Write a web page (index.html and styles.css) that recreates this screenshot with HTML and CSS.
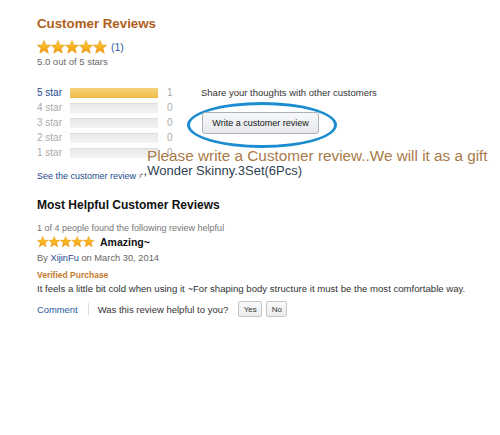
FILE: index.html
```html
<!DOCTYPE html>
<html>
<head>
<meta charset="utf-8">
<link rel="stylesheet" href="styles.css">
</head>
<body>
<div class="page">
  <h2 class="title">Customer Reviews</h2>
  <div class="rating">
    <span class="stars big">
      <svg viewBox="0 0 70 14" width="70" height="14">
        <defs>
          <linearGradient id="g1" x1="0" y1="0" x2="0" y2="1">
            <stop offset="0" stop-color="#ffce3a"/>
            <stop offset="1" stop-color="#f29b0c"/>
          </linearGradient>
          <polygon id="st" points="7,0.4 8.9,5 13.7,5.2 10,8.3 11.3,13.2 7,10.4 2.7,13.2 4,8.3 0.3,5.2 5.1,5" />
        </defs>
        <use href="#st" x="0" fill="url(#g1)" stroke="#e38b00" stroke-width="0.5"/>
        <use href="#st" x="14" fill="url(#g1)" stroke="#e38b00" stroke-width="0.5"/>
        <use href="#st" x="28" fill="url(#g1)" stroke="#e38b00" stroke-width="0.5"/>
        <use href="#st" x="42" fill="url(#g1)" stroke="#e38b00" stroke-width="0.5"/>
        <use href="#st" x="56" fill="url(#g1)" stroke="#e38b00" stroke-width="0.5"/>
      </svg>
    </span>
    <span class="count-link">(1)</span>
  </div>
  <div class="summary">5.0 out of 5 stars</div>

  <div class="hist-area">
    <div class="hist">
      <div class="hrow"><span class="hlabel active">5 star</span><span class="bar"><span class="fill" style="width:100%"></span></span><span class="hcount">1</span></div>
      <div class="hrow"><span class="hlabel">4 star</span><span class="bar"></span><span class="hcount">0</span></div>
      <div class="hrow"><span class="hlabel">3 star</span><span class="bar"></span><span class="hcount">0</span></div>
      <div class="hrow"><span class="hlabel">2 star</span><span class="bar"></span><span class="hcount">0</span></div>
      <div class="hrow"><span class="hlabel">1 star</span><span class="bar"></span><span class="hcount">0</span></div>
    </div>
    <div class="share">
      <div class="share-text">Share your thoughts with other customers</div>
      <div class="btn-wrap">
        <span class="ellipse"></span>
        <button class="write-btn">Write a customer review</button>
      </div>
    </div>
  </div>

  <div class="see-link">See the customer review <span class="chev">›</span></div>
  <div class="annot">
    <div class="annot1">Please write a Customer review..We will it as a gift</div>
    <div class="annot2">.,Wonder Skinny.3Set(6Pcs)</div>
  </div>

  <h3 class="helpful-title">Most Helpful Customer Reviews</h3>
  <div class="found">1 of 4 people found the following review helpful</div>
  <div class="review-head">
    <svg viewBox="0 0 57 12" width="57" height="12">
      <defs>
        <polygon id="sm" points="5.7,0.3 7.2,4.1 11.2,4.3 8.1,6.8 9.2,10.9 5.7,8.6 2.2,10.9 3.3,6.8 0.2,4.3 4.2,4.1"/>
      </defs>
      <use href="#sm" x="0" fill="url(#g1)" stroke="#e38b00" stroke-width="0.4"/>
      <use href="#sm" x="11.5" fill="url(#g1)" stroke="#e38b00" stroke-width="0.4"/>
      <use href="#sm" x="23" fill="url(#g1)" stroke="#e38b00" stroke-width="0.4"/>
      <use href="#sm" x="34.5" fill="url(#g1)" stroke="#e38b00" stroke-width="0.4"/>
      <use href="#sm" x="46" fill="url(#g1)" stroke="#e38b00" stroke-width="0.4"/>
    </svg>
    <span class="review-title">Amazing~</span>
  </div>
  <div class="byline">By <span class="author">XijinFu</span> on March 30, 2014</div>
  <div class="verified">Verified Purchase</div>
  <div class="review-text">It feels a little bit cold when using it ~For shaping body structure it must be the most comfortable way.</div>
  <div class="actions">
    <span class="comment">Comment</span>
    <span class="sep"></span>
    <span class="ask">Was this review helpful to you?</span>
    <button class="small-btn yes">Yes</button>
    <button class="small-btn no">No</button>
  </div>
</div>
</body>
</html>
```

FILE: styles.css
```css
html, body {
  margin: 0;
  padding: 0;
  background: #ffffff;
}
body {
  font-family: "Liberation Sans", Arial, sans-serif;
  color: #333;
  width: 500px;
  height: 435px;
  overflow: hidden;
}
.page {
  position: relative;
  padding: 15px 0 0 37px;
}
.title {
  margin: 0;
  font-size: 13.3px;
  line-height: 17px;
  font-weight: bold;
  color: #b0601a;
}
.rating {
  display: flex;
  align-items: center;
  gap: 4px;
  margin-top: 8px;
  height: 14px;
}
.stars svg { display: block; }
.count-link {
  font-size: 10.5px;
  color: #2a5a9a;
}
.summary {
  margin-top: 2px;
  font-size: 9.5px;
  line-height: 12px;
  color: #666;
}
.hist-area {
  display: flex;
  margin-top: 17px;
}
.hist {
  display: flex;
  flex-direction: column;
  width: 164px;
}
.hrow {
  display: flex;
  align-items: center;
  height: 15px;
}
.hlabel {
  width: 33px;
  font-size: 10px;
  color: #aaa;
}
.hlabel.active { color: #1e4a8c; }
.bar {
  width: 88px;
  height: 10px;
  background: linear-gradient(#e8e8e8, #f3f3f3);
  box-shadow: inset 0 1px 1px rgba(0,0,0,0.05);
  display: block;
}
.fill {
  display: block;
  height: 100%;
  background: linear-gradient(#f6d27a, #f0bb45);
}
.hcount {
  margin-left: 9px;
  font-size: 10px;
  color: #aaa;
}
.share {
  display: flex;
  flex-direction: column;
}
.share-text {
  font-size: 9.5px;
  line-height: 15px;
  color: #333;
}
.btn-wrap {
  position: relative;
  margin-top: 12px;
  margin-left: 1px;
}
.ellipse {
  position: absolute;
  left: -15px;
  top: -10px;
  width: 144px;
  height: 40px;
  border: 3px solid #1a8ccf;
  border-radius: 50%;
}
.write-btn {
  position: relative;
  display: block;
  font-family: "Liberation Sans", Arial, sans-serif;
  font-size: 9px;
  color: #111;
  width: 117px;
  height: 22px;
  padding: 0;
  border: 1px solid #adb1b8;
  border-radius: 3px;
  background: linear-gradient(#f7f8fa, #e7e9ec);
}
.see-link {
  margin-top: 10px;
  font-size: 9px;
  line-height: 12px;
  color: #1e4a8c;
}
.chev { color: #555; }
.annot {
  position: absolute;
  left: 140px;
  top: 149px;
}
.annot1 {
  margin-left: 7px;
  font-size: 15.3px;
  line-height: 14px;
  color: #a87a48;
  white-space: nowrap;
}
.annot2 {
  font-size: 13px;
  line-height: 15px;
  color: #2f3f52;
  white-space: nowrap;
}
.helpful-title {
  margin: 16px 0 0;
  font-size: 12px;
  line-height: 15px;
  font-weight: bold;
  color: #111;
}
.found {
  margin-top: 10px;
  font-size: 9px;
  line-height: 11px;
  color: #777;
}
.review-head {
  display: flex;
  align-items: center;
  gap: 6px;
  margin-top: 2px;
  height: 12px;
}
.review-head svg { display: block; }
.review-title {
  font-size: 10.5px;
  font-weight: bold;
  color: #111;
}
.byline {
  margin-top: 4px;
  font-size: 9.3px;
  line-height: 12px;
  color: #666;
}
.author { color: #1e4a8c; }
.verified {
  margin-top: 6px;
  font-size: 8.5px;
  line-height: 10px;
  font-weight: bold;
  color: #c47a2c;
}
.review-text {
  margin-top: 3px;
  font-size: 9.6px;
  line-height: 12px;
  color: #333;
  white-space: nowrap;
}
.actions {
  display: flex;
  align-items: center;
  margin-top: 6px;
  height: 16px;
}
.comment {
  font-size: 9.4px;
  color: #2a5a9a;
}
.sep {
  width: 1px;
  height: 12px;
  background: #ddd;
  margin: 0 9px 0 10px;
}
.ask {
  font-size: 9.5px;
  color: #333;
  margin-right: 10px;
}
.small-btn {
  font-family: "Liberation Sans", Arial, sans-serif;
  font-size: 8px;
  color: #333;
  height: 16px;
  padding: 0;
  margin-right: 4px;
  border: 1px solid #c5c5c5;
  border-radius: 2px;
  background: linear-gradient(#fafafa, #ececec);
}
.small-btn.yes { width: 24px; }
.small-btn.no { width: 21px; }
```
